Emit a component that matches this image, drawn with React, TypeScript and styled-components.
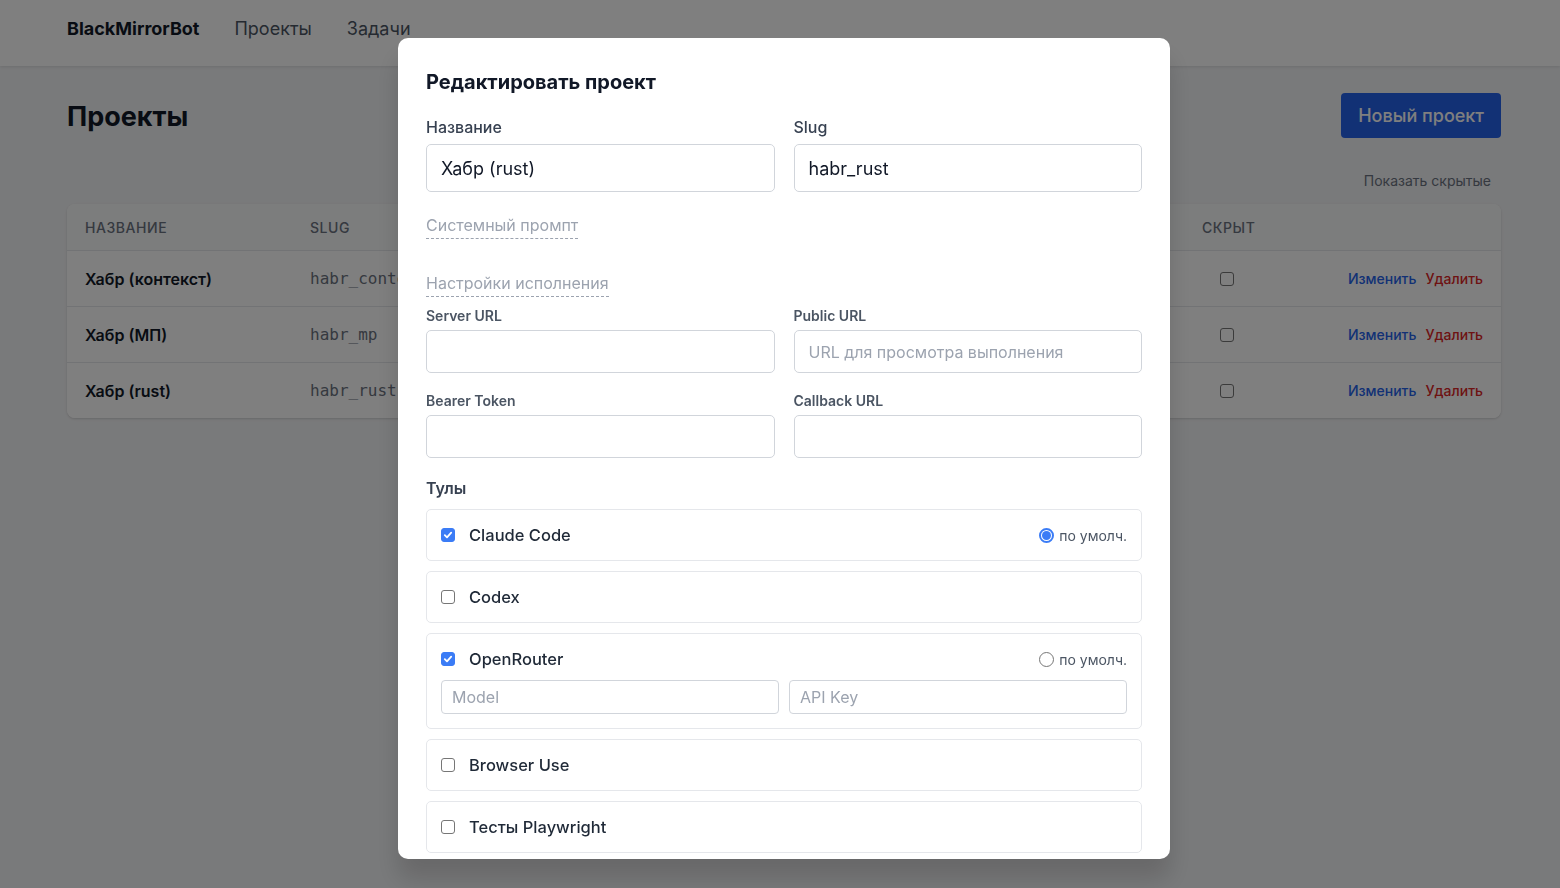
import React from "react";
import styled, { createGlobalStyle } from "styled-components";

const GlobalStyle = createGlobalStyle`
	html, body {
		margin: 0;
		padding: 0;
	}
	body {
		font-family: Inter, "Noto Sans", "Liberation Sans", sans-serif;
		background-color: #f3f4f6;
		color: #111827;
	}
	* {
		box-sizing: border-box;
	}
`;

const Page = styled.div`
	min-height: 100vh;
`;

const NavBar = styled.header`
	height: 66px;
	background-color: #fff;
	box-shadow: 0 1px 3px rgba(0, 0, 0, 0.1);
	display: flex;
	align-items: flex-start;
	padding: 16px 59px 0 67px;
	gap: 35px;
`;

const Logo = styled.div`
	font-size: 18px;
	line-height: 26px;
	font-weight: 700;
	color: #111827;
`;

const NavLink = styled.a`
	font-size: 18px;
	line-height: 26px;
	color: #4b5563;
	text-decoration: none;
`;

const Main = styled.main`
	padding: 27px 59px 0 67px;
`;

const TitleRow = styled.div`
	display: flex;
	align-items: center;
	justify-content: space-between;
`;

const PageTitle = styled.h1`
	margin: 0;
	font-size: 27px;
	line-height: 40px;
	font-weight: 700;
	color: #111827;
	padding-top: 3px;
`;

const PrimaryButton = styled.button`
	height: 45px;
	padding: 0 17px;
	border: none;
	border-radius: 4px;
	background-color: #2563eb;
	color: #fff;
	font-family: inherit;
	font-size: 18px;
	font-weight: 500;
`;

const FilterRow = styled.div`
	display: flex;
	justify-content: flex-end;
	margin: 32px 0 12px;
	padding-right: 10px;
`;

const GhostLink = styled.span`
	font-size: 14px;
	line-height: 22px;
	color: #6b7280;
`;

const TableCard = styled.div`
	background-color: #fff;
	border-radius: 8px;
	box-shadow: 0 1px 3px rgba(0, 0, 0, 0.1), 0 1px 2px rgba(0, 0, 0, 0.06);
	overflow: hidden;
`;

const TableRow = styled.div<{ $head?: boolean }>`
	display: grid;
	grid-template-columns: 225px 1fr 86px 231px;
	align-items: center;
	height: ${(p) => (p.$head ? "46px" : "56px")};
	background-color: ${(p) => (p.$head ? "#f9fafb" : "#fff")};
	border-top: ${(p) => (p.$head ? "none" : "1px solid #e5e7eb")};
`;

const HeadCell = styled.div<{ $center?: boolean }>`
	padding: 0 18px;
	font-size: 14px;
	font-weight: 500;
	letter-spacing: 0.04em;
	text-transform: uppercase;
	color: #6b7280;
	text-align: ${(p) => (p.$center ? "center" : "left")};
`;

const NameCell = styled.div`
	padding: 0 18px;
	font-size: 16px;
	font-weight: 600;
	color: #111827;
`;

const SlugCell = styled.div`
	padding: 0 18px;
	font-family: "DejaVu Sans Mono", "Liberation Mono", monospace;
	font-size: 16px;
	color: #6b7280;
`;

const CenterCell = styled.div`
	display: flex;
	justify-content: center;
`;

const ActionsCell = styled.div`
	display: flex;
	justify-content: flex-end;
	gap: 9px;
	padding: 0 18px;
`;

const ActionLink = styled.a<{ $danger?: boolean }>`
	font-size: 14px;
	font-weight: 500;
	color: ${(p) => (p.$danger ? "#dc2626" : "#2563eb")};
	text-decoration: none;
`;

const Box = styled.span<{ $checked?: boolean }>`
	display: inline-flex;
	align-items: center;
	justify-content: center;
	flex: none;
	width: 14px;
	height: 14px;
	border-radius: 3px;
	border: 1px solid ${(p) => (p.$checked ? "#3b7cf6" : "#767676")};
	background-color: ${(p) => (p.$checked ? "#3b7cf6" : "#fff")};
`;

const Radio = styled.span<{ $checked?: boolean }>`
	display: inline-flex;
	align-items: center;
	justify-content: center;
	flex: none;
	width: 15px;
	height: 15px;
	border-radius: 50%;
	border: ${(p) => (p.$checked ? "2px solid #3b7cf6" : "1px solid #767676")};
	background-color: #fff;
	&::after {
		content: "";
		display: ${(p) => (p.$checked ? "block" : "none")};
		width: 9px;
		height: 9px;
		border-radius: 50%;
		background-color: #3b7cf6;
	}
`;

const Overlay = styled.div`
	position: fixed;
	inset: 0;
	background-color: rgba(0, 0, 0, 0.5);
	display: flex;
	justify-content: center;
	align-items: flex-start;
	padding: 38px 0 0 8px;
`;

const Modal = styled.div`
	width: 772px;
	height: 821px;
	overflow: hidden;
	background-color: #fff;
	border-radius: 10px;
	box-shadow: 0 20px 25px rgba(0, 0, 0, 0.15);
	padding: 30px 28px;
`;

const ModalTitle = styled.h2`
	margin: 0 0 19px;
	font-size: 20px;
	line-height: 28px;
	font-weight: 700;
	color: #111827;
`;

const FieldGrid = styled.div<{ $gapY?: number }>`
	display: grid;
	grid-template-columns: 1fr 1fr;
	column-gap: 19px;
	row-gap: ${(p) => p.$gapY || 0}px;
`;

const SettingsBlock = styled.div`
	margin-top: 9px;
`;

const Field = styled.div`
	display: flex;
	flex-direction: column;
`;

const Label = styled.label<{ $small?: boolean }>`
	font-size: ${(p) => (p.$small ? "14px" : "16px")};
	line-height: ${(p) => (p.$small ? "20px" : "24px")};
	font-weight: ${(p) => (p.$small ? 600 : 500)};
	color: ${(p) => (p.$small ? "#4b5563" : "#374151")};
	margin-bottom: ${(p) => (p.$small ? "4px" : "5px")};
`;

const Input = styled.input<{ $large?: boolean }>`
	height: ${(p) => (p.$large ? "48px" : "43px")};
	width: 100%;
	padding: 0 14px;
	border: 1px solid #d1d5db;
	border-radius: 5px;
	font-family: inherit;
	font-size: ${(p) => (p.$large ? "18px" : "16px")};
	color: #111827;
	outline: none;
	&::placeholder {
		color: #9ca3af;
	}
`;

const ToggleLink = styled.button<{ $top: number }>`
	display: block;
	margin-top: ${(p) => p.$top}px;
	padding: 0 0 1px;
	background: none;
	border: none;
	border-bottom: 1px dashed #9ca3af;
	font-family: inherit;
	font-size: 16px;
	line-height: 24px;
	color: #9ca3af;
`;

const SectionTitle = styled.div`
	margin: 18px 0 9px;
	font-size: 16px;
	line-height: 24px;
	font-weight: 600;
	color: #374151;
`;

const ToolList = styled.div`
	display: flex;
	flex-direction: column;
	gap: 10px;
`;

const ToolCard = styled.div`
	border: 1px solid #e5e7eb;
	border-radius: 5px;
	padding: 14px;
	display: flex;
	flex-direction: column;
	gap: 10px;
`;

const ToolHead = styled.div`
	display: flex;
	align-items: center;
	height: 22px;
	gap: 14px;
`;

const ToolName = styled.span`
	flex: 1;
	font-size: 16.5px;
	font-weight: 500;
	color: #1f2937;
`;

const DefaultPick = styled.span`
	display: flex;
	align-items: center;
	gap: 5px;
	font-size: 14px;
	color: #4b5563;
`;

const ToolInputs = styled.div`
	display: grid;
	grid-template-columns: 1fr 1fr;
	gap: 10px;
`;

const SmallInput = styled.input`
	height: 34px;
	width: 100%;
	padding: 0 10px;
	border: 1px solid #d1d5db;
	border-radius: 4px;
	font-family: inherit;
	font-size: 16px;
	outline: none;
	&::placeholder {
		color: #9ca3af;
	}
`;

const Check = () => (
	<svg width="10" height="10" viewBox="0 0 10 10">
		<path d="M1.8 5.2 L4 7.4 L8.2 2.6" fill="none" stroke="#fff" strokeWidth="1.8" strokeLinecap="round" strokeLinejoin="round" />
	</svg>
);

const projects = [
	{ name: "Хабр (контекст)", slug: "habr_context" },
	{ name: "Хабр (МП)", slug: "habr_mp" },
	{ name: "Хабр (rust)", slug: "habr_rust" },
];

const tools = [
	{ name: "Claude Code", on: true, radio: "on" },
	{ name: "Codex", on: false },
	{ name: "OpenRouter", on: true, radio: "off", extra: true },
	{ name: "Browser Use", on: false },
	{ name: "Тесты Playwright", on: false },
];

const App = () => {
	return (
		<Page>
			<GlobalStyle />
			<NavBar>
				<Logo>BlackMirrorBot</Logo>
				<NavLink>Проекты</NavLink>
				<NavLink>Задачи</NavLink>
			</NavBar>
			<Main>
				<TitleRow>
					<PageTitle>Проекты</PageTitle>
					<PrimaryButton>Новый проект</PrimaryButton>
				</TitleRow>
				<FilterRow>
					<GhostLink>Показать скрытые</GhostLink>
				</FilterRow>
				<TableCard>
					<TableRow $head>
						<HeadCell>Название</HeadCell>
						<HeadCell>Slug</HeadCell>
						<HeadCell $center>Скрыт</HeadCell>
						<HeadCell />
					</TableRow>
					{projects.map((item) => (
						<TableRow key={item.slug}>
							<NameCell>{item.name}</NameCell>
							<SlugCell>{item.slug}</SlugCell>
							<CenterCell>
								<Box />
							</CenterCell>
							<ActionsCell>
								<ActionLink>Изменить</ActionLink>
								<ActionLink $danger>Удалить</ActionLink>
							</ActionsCell>
						</TableRow>
					))}
				</TableCard>
			</Main>

			<Overlay>
				<Modal>
					<ModalTitle>Редактировать проект</ModalTitle>
					<FieldGrid>
						<Field>
							<Label>Название</Label>
							<Input $large defaultValue="Хабр (rust)" />
						</Field>
						<Field>
							<Label>Slug</Label>
							<Input $large defaultValue="habr_rust" />
						</Field>
					</FieldGrid>
					<ToggleLink $top={21}>Системный промпт</ToggleLink>
					<ToggleLink $top={32}>Настройки исполнения</ToggleLink>
					<SettingsBlock>
						<FieldGrid $gapY={18}>
							<Field>
								<Label $small>Server URL</Label>
								<Input />
							</Field>
							<Field>
								<Label $small>Public URL</Label>
								<Input placeholder="URL для просмотра выполнения" />
							</Field>
							<Field>
								<Label $small>Bearer Token</Label>
								<Input />
							</Field>
							<Field>
								<Label $small>Callback URL</Label>
								<Input />
							</Field>
						</FieldGrid>
					</SettingsBlock>
					<SectionTitle>Тулы</SectionTitle>
					<ToolList>
						{tools.map((tool) => (
							<ToolCard key={tool.name}>
								<ToolHead>
									<Box $checked={tool.on}>{tool.on && <Check />}</Box>
									<ToolName>{tool.name}</ToolName>
									{tool.radio && (
										<DefaultPick>
											<Radio $checked={tool.radio === "on"} />
											по умолч.
										</DefaultPick>
									)}
								</ToolHead>
								{tool.extra && (
									<ToolInputs>
										<SmallInput placeholder="Model" />
										<SmallInput placeholder="API Key" />
									</ToolInputs>
								)}
							</ToolCard>
						))}
					</ToolList>
				</Modal>
			</Overlay>
		</Page>
	);
};

export default App;
